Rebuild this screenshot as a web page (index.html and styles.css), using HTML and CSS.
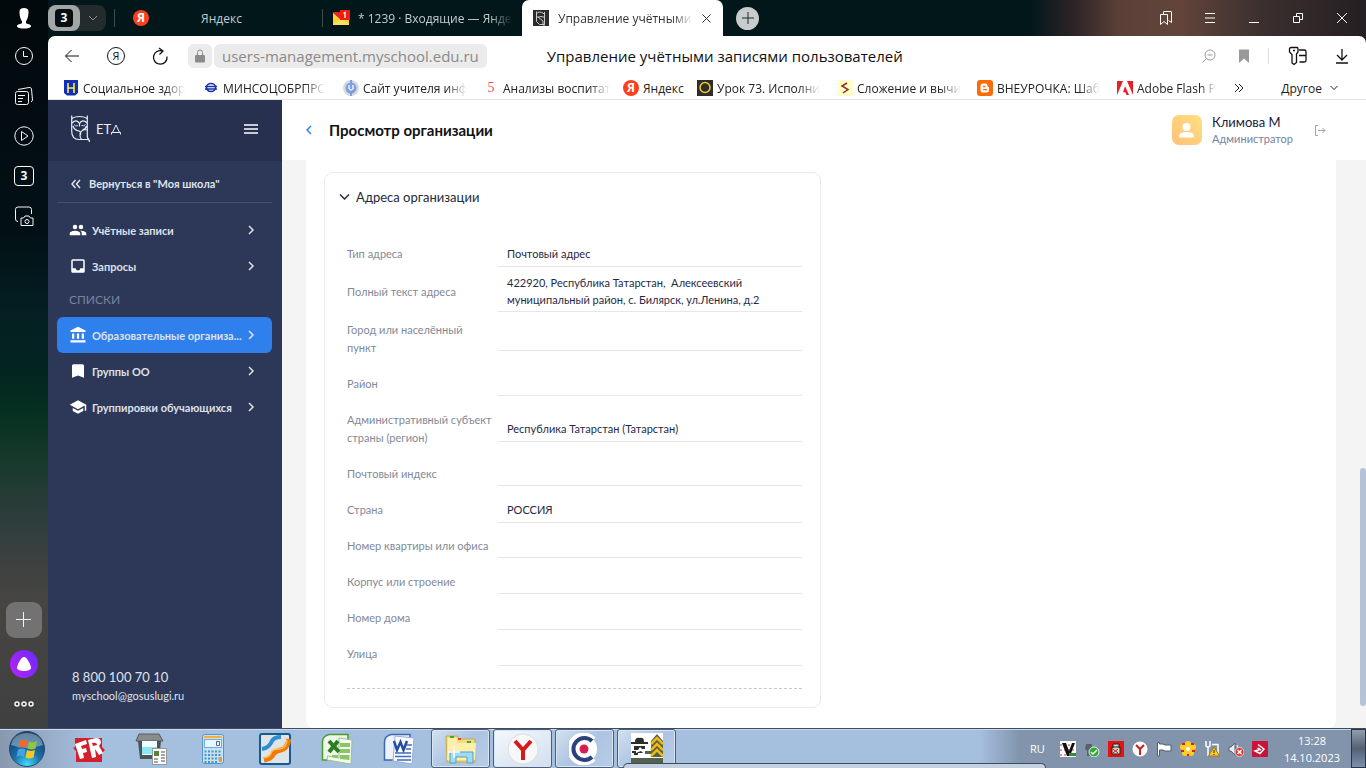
FILE: index.html
```html
<!DOCTYPE html>
<html lang="ru">
<head>
<meta charset="utf-8">
<title>Управление учётными записями пользователей</title>
<link rel="stylesheet" href="styles.css">
</head>
<body>
<div class="desktop">
  <div class="browser">
    <aside class="rail">
      <button class="rail-btn avatar-btn" aria-label="Профиль"><svg width="20" height="22" viewBox="0 0 20 22"><path d="M5.500 5C5.500 2 7 1 10 1s4.500 1 4.500 4-1 8-2.500 9v2c1 1.500 5 1 5 3s-4 2.500-7 2.500S3 21 3 19s4-1.500 5-3v-2C6.500 13 5.500 8 5.500 5z"/></svg></button>
      <button class="rail-btn" aria-label="История"><svg width="20" height="20" viewBox="0 0 20 20"><circle cx="10" cy="10" r="8.500"/><path d="M9.500 5v5.500H14"/></svg></button>
      <button class="rail-btn" aria-label="Коллекции"><svg width="20" height="20" viewBox="0 0 20 20"><rect x="1.500" y="5.500" width="13" height="13" rx="2"/><path d="M4 3.500 15 1.500q2-.5 2.500 1.500L18.500 14q0 1-1.500 2M4 9.500h7M4 12.500h5M4 15.500h4"/></svg></button>
      <button class="rail-btn" aria-label="Видео"><svg width="20" height="20" viewBox="0 0 20 20"><circle cx="10" cy="10" r="9.200"/><path d="M7.500 5.500v9l6.500-4.500z"/></svg></button>
      <button class="rail-btn" aria-label="Вкладки"><span class="rail-count">3</span></button>
      <button class="rail-btn" aria-label="Скриншот"><svg width="20" height="20" viewBox="0 0 20 20"><path d="M4 15.500q-2.500 0-2.500-2.500V3.500Q1.500 1 4 1h11q2.500 0 2.500 2.500V8M7 12h2.500l1.500-2h4l1.500 2H19v7.500H7z"/><circle cx="13" cy="15.500" r="2"/></svg></button>
      <div class="rail-bottom">
        <button class="rail-add" aria-label="Добавить"><svg width="16" height="16" viewBox="0 0 16 16"><path d="M7.500 0v15M0 7.500h15"/></svg></button>
        <button class="rail-alice" aria-label="Алиса"><svg width="16" height="16" viewBox="0 0 16 16"><path d="M8 1c3 0 7 8 7 11 0 4-14 4-14 0C1 9 5 1 8 1z" fill="#fff" stroke="none"/></svg></button>
        <button class="rail-btn" aria-label="Ещё"><svg width="20" height="8" viewBox="0 0 20 8" stroke-width="1.500"><circle cx="3" cy="4" r="2"/><circle cx="10" cy="4" r="2"/><circle cx="17" cy="4" r="2"/></svg></button>
      </div>
    </aside>

    <div class="frame">
      <div class="tabs">
        <div class="tab-group">
          <button class="group-count" aria-label="Группа вкладок"><span>3</span></button>
          <button class="group-arrow" aria-label="Список вкладок"><svg width="10" height="6" viewBox="0 0 10 6"><path d="m1 1 4 4 4-4"/></svg></button>
        </div>
        <div class="tab tab-pinned"><span class="ya">Я</span><span class="tab-title centered">Яндекс</span></div>
        <div class="tab tab-mail">
          <svg width="17" height="16" viewBox="0 0 17 16"><path d="M0 2h16v13H0z" fill="#ffd42e"/><path d="M0 2h16v1L8 10 0 3z" fill="#e52620"/><path d="M0 15 8 8l8 7z" fill="#ffe05c"/><rect x="7" y="0" width="10" height="10" fill="#f21c0d"/><path d="m10.500 3.500 1.500-1V8" fill="none" stroke="#fff" stroke-width="1.300"/></svg>
          <span class="tab-title fade">* 1239 · Входящие — Янде</span>
        </div>
        <div class="tab tab-active">
          <svg width="16" height="16" viewBox="0 0 16 16"><rect width="16" height="16" fill="#2c2c2e"/><path d="M3.500 1.500v10l3 3h5V2M3.500 4q2-4 8 0M4 7h3l1-1 1 1h2M5 7l5 4v4l2 0" fill="none" stroke="#c9c9c9"/></svg>
          <span class="tab-title fade">Управление учётными</span>
          <button class="tab-close" aria-label="Закрыть вкладку"><svg width="9" height="9" viewBox="0 0 9 9"><path d="m.5.5 8 8m0-8-8 8"/></svg></button>
        </div>
        <button class="new-tab" aria-label="Новая вкладка"><svg width="12" height="12" viewBox="0 0 12 12"><path d="M6 0v12M0 6h12"/></svg></button>
        <div class="window-tools">
          <button aria-label="Закладки"><svg width="14" height="16" viewBox="0 0 14 16"><path d="M1.500 4.500h7v10l-3.500-3-3.500 3zM4.500 4V2q0-.5.500-.5h7q.5 0 .5.500v10.500l-3-2"/></svg></button>
          <button aria-label="Меню"><svg width="14" height="16" viewBox="0 0 14 16"><path d="M2 3.500h10M2 8h10M2 12.500h10"/></svg></button>
          <button aria-label="Свернуть"><svg width="14" height="16" viewBox="0 0 14 16"><path d="M2 12.500h10"/></svg></button>
          <button aria-label="Развернуть"><svg width="14" height="16" viewBox="0 0 14 16"><path d="M2.500 6.500h6v6h-6zM5.500 6V3.500h6v6H9"/></svg></button>
          <button aria-label="Закрыть"><svg width="14" height="16" viewBox="0 0 14 16"><path d="m2 3 10 10M12 3 2 13"/></svg></button>
        </div>
      </div>

      <div class="window">
        <div class="toolbar">
          <button class="tool" aria-label="Назад"><svg width="16" height="14" viewBox="0 0 16 14"><path d="M15 7H1.500m6-6-6 6 6 6"/></svg></button>
          <button class="tool ya-home" aria-label="Яндекс">Я</button>
          <button class="tool" aria-label="Обновить"><svg width="18" height="18" viewBox="0 0 18 18" stroke-width="1.300"><path d="M16 9.500A6.800 6.800 0 1 1 11.500 4M8 1l4 3-3.500 3.500"/></svg></button>
          <span class="lock"><svg width="12" height="14" viewBox="0 0 12 14"><rect x="1" y="6" width="10" height="7.500" rx="1" fill="#8b8b8b"/><path d="M3.500 6V3.500a2.500 2.500 0 0 1 5 0V6" fill="none" stroke="#8b8b8b"/></svg></span>
          <button class="url">users-management.myschool.edu.ru</button>
          <span class="page-title">Управление учётными записями пользователей</span>
          <div class="toolbar-right">
            <button class="muted" aria-label="Масштаб"><svg width="14" height="14" viewBox="0 0 14 14"><circle cx="8" cy="6" r="5"/><path d="M5.500 6h5M4.500 9.500.5 13.500"/></svg></button>
            <button class="muted" aria-label="В закладки"><svg width="12" height="14" viewBox="0 0 12 14"><path d="M1 .5h10V14l-5-4.500L1 14z" fill="#999" stroke="none"/></svg></button>
            <span class="divider"></span>
            <button aria-label="Пароли"><svg width="20" height="20" viewBox="0 0 20 20" stroke-width="1.300"><path d="M3 1.500h6q1 0 1 1.500v3L8.500 8v8.500L6 18.500 4 17V8.500L1.500 6V3q0-1.500 1.500-1.500zM5 4.500h2M11 4h5.500q1.500 0 1.500 1.500v9q0 1.500-1.500 1.500h-5M11 9.500h7"/></svg></button>
            <button aria-label="Загрузки"><svg width="14" height="16" viewBox="0 0 14 16" stroke-width="1.300"><path d="M7 1v10.500M2 7l5 5 5-5M1 15h12"/></svg></button>
          </div>
        </div>

        <nav class="bookmarks">
          <a href="#"><svg width="16" height="16" viewBox="0 0 16 16"><path d="M1 0h14v13l-3 2.500H4L1 13z" fill="#1430b8"/><path d="M5 3v10M11 3v10M5 8h6" stroke="#fff23a" stroke-width="1.600"/></svg><span>Социальное здор</span></a>
          <a href="#"><svg width="16" height="16" viewBox="0 0 16 16" fill="none" stroke="#1530a8" stroke-width="1.500"><ellipse cx="8" cy="7.500" rx="4.500" ry="4"/><path d="M2 6.500h12M2 9h12"/></svg><span>МИНСОЦОБРПРС</span></a>
          <a href="#"><svg width="16" height="16" viewBox="0 0 16 16"><circle cx="8" cy="8" r="8" fill="#d9d9dc"/><circle cx="8" cy="8" r="5.500" fill="#7d9fe8"/><path d="M8 0v3M8 13v3" stroke="#7d9fe8" stroke-width="2"/><path d="M6 5v3.500q2 3 4 0V5" fill="none" stroke="#fff" stroke-width="1.300"/></svg><span>Сайт учителя инф</span></a>
          <a href="#"><span class="five">5</span><span>Анализы воспитат</span></a>
          <a href="#" class="short"><span class="ya">Я</span><span>Яндекс</span></a>
          <a href="#"><svg width="16" height="16" viewBox="0 0 16 16"><rect width="16" height="16" fill="#2d2d2d"/><circle cx="8" cy="7.500" r="5" fill="none" stroke="#f4c91e" stroke-width="1.500"/></svg><span>Урок 73. Исполни</span></a>
          <a href="#"><svg width="16" height="16" viewBox="0 0 16 16"><rect width="16" height="16" fill="#ffffcb"/><path d="M10 3 5 6l6 3.500L6 13" fill="none" stroke="#a02520" stroke-width="1.500"/></svg><span>Сложение и вычи</span></a>
          <a href="#"><svg width="16" height="16" viewBox="0 0 16 16"><rect width="16" height="16" rx="3" fill="#fb6c08"/><path d="M5.500 3.500h3q2 0 2 2 0 1.500 1.500 1.500v3q0 2.500-2.500 2.500h-4Q3.500 12.500 3.500 10V6q0-2.500 2-2.500z" fill="#fff"/><path d="M6 6.500h2.500M6 9.700h4" stroke="#fb6c08" stroke-width="1.300"/></svg><span>ВНЕУРОЧКА: Шаб</span></a>
          <a href="#" class="last"><svg width="16" height="16" viewBox="0 0 16 16"><path d="M0 1h16v14H0z" fill="#fff"/><path d="M0 1h6L0 15zM10 1h6v14z" fill="#ed1c24"/><path d="m8 6 4 9H9.500l-1-2.700H6z" fill="#ed1c24"/></svg><span>Adobe Flash P</span></a>
          <button class="more" aria-label="Ещё закладки"><svg width="10" height="10" viewBox="0 0 10 10"><path d="m1 1 4 4-4 4m4-8 4 4-4 4"/></svg></button>
          <button class="other">Другое <svg width="8" height="6" viewBox="0 0 8 6"><path d="m.5 1 3.500 3.500L7.500 1"/></svg></button>
        </nav>

        <div class="app">
          <aside class="sidebar">
            <div class="brand">
              <svg width="22" height="28" viewBox="0 0 22 28" fill="none" stroke="#e9edf5" stroke-width="1.200"><path d="M1.700.5V16q0 8.500 7.300 8.500h8.500q2 0 2 2.500M17.300.5V21q0 3 2 3.500M1.700 4Q4 1.500 9.500 1.500T17.300 4M2 8q4.500-4.500 7.500.5Q12.500 3.500 17 8M9.500 8.500v3M17 14.500q-7 0-7 6 0 3 2 4M3 11q1 4 6 5 2 .5 1.500 4M16.500 11q-1 3.500-4.500 4.500"/><path d="M4 9.500q1.500 2.500 4 1M11.500 10.500q2.500 1 4-1" stroke-width=".9"/></svg>
              <span class="brand-name">ЕТ<svg width="10" height="12" viewBox="0 0 10 12"><path d="M.5 11.500V9.500h9v2M1.500 9.500 5 2l3.500 7.500"/></svg></span>
              <button class="burger" aria-label="Свернуть меню"><svg width="14" height="12" viewBox="0 0 14 12"><path d="M0 2h14M0 6h14M0 10h14"/></svg></button>
            </div>
            <nav class="side-nav">
              <a href="#" class="back-link"><svg width="10" height="10" viewBox="0 0 10 10"><path d="M4.500 1 1 5l3.500 4M9 1 5.500 5 9 9"/></svg>Вернуться в "Моя школа"</a>
              <a href="#" class="nav-item"><svg class="ni" viewBox="0 0 24 24"><path d="M16 11a3 3 0 1 0 0-6 3 3 0 0 0 0 6zm-8 0a3 3 0 1 0 0-6 3 3 0 0 0 0 6zm0 2c-2.330 0-7 1.170-7 3.500V19h14v-2.500C15 14.170 10.330 13 8 13zm8 0c-.29 0-.62.020-.97.050 1.160.84 1.970 1.970 1.970 3.450V19h6v-2.500c0-2.330-4.670-3.500-7-3.500z"/></svg><span>Учётные записи</span><svg class="chev" viewBox="0 0 7 10"><path d="m1 1 4 4-4 4"/></svg></a>
              <a href="#" class="nav-item"><svg class="ni" viewBox="0 0 24 24"><path d="M19 3H5a2 2 0 0 0-2 2v14c0 1.100.9 2 2 2h14a2 2 0 0 0 2-2V5a2 2 0 0 0-2-2zm0 12h-4a3 3 0 0 1-6 0H5V5h14z"/></svg><span>Запросы</span><svg class="chev" viewBox="0 0 7 10"><path d="m1 1 4 4-4 4"/></svg></a>
              <h2 class="nav-head">СПИСКИ</h2>
              <a href="#" class="nav-item active"><svg class="ni" viewBox="0 0 24 24"><path d="M4 10v7h3v-7zm6.500 0v7h3v-7zM2 22h20v-3H2zm15-12v7h3v-7zm-5-9L2 6v2h20V6z"/></svg><span>Образовательные организа...</span><svg class="chev" viewBox="0 0 7 10"><path d="m1 1 4 4-4 4"/></svg></a>
              <a href="#" class="nav-item"><svg class="ni" viewBox="0 0 24 24"><path d="M18 3H6a2 2 0 0 0-2 2v16l8-3 8 3V5a2 2 0 0 0-2-2z"/></svg><span>Группы ОО</span><svg class="chev" viewBox="0 0 7 10"><path d="m1 1 4 4-4 4"/></svg></a>
              <a href="#" class="nav-item"><svg class="ni" viewBox="0 0 24 24"><path d="M5 13.180v4L12 21l7-3.820v-4L12 17zM12 3 1 9l11 6 9-4.910V17h2V9z"/></svg><span>Группировки обучающихся</span><svg class="chev" viewBox="0 0 7 10"><path d="m1 1 4 4-4 4"/></svg></a>
            </nav>
            <footer class="contacts"><a class="phone" href="#">8 800 100 70 10</a><a class="mail" href="#">myschool@gosuslugi.ru</a></footer>
          </aside>

          <section class="content">
            <header class="page-head">
              <button class="back" aria-label="Назад"><svg width="6" height="10" viewBox="0 0 6 10"><path d="M5 1 1 5l4 4"/></svg></button>
              <h1>Просмотр организации</h1>
              <div class="user">
                <svg width="30" height="30" viewBox="0 0 30 30"><defs><linearGradient id="av" x1="0" y1="1" x2="1" y2="0"><stop offset="0" stop-color="#ffc078"/><stop offset="1" stop-color="#ffe082"/></linearGradient></defs><rect width="30" height="30" rx="7" fill="url(#av)"/><circle cx="14.500" cy="12" r="4" fill="#fff"/><path d="M7 22.500V21q0-4 7.500-4t7.500 4v1.500z" fill="#fff"/></svg>
                <div><div class="user-name">Климова М</div><div class="user-role">Администратор</div></div>
                <button class="exit" aria-label="Выйти"><svg width="11" height="11" viewBox="0 0 11 11"><path d="M3 .5H.5v10H3M3 5.500h7M7.500 3 10 5.500 7.500 8"/></svg></button>
              </div>
            </header>
            <div class="scroll-area">
              <div class="panel">
                <section class="card">
                  <h2><svg width="11" height="8" viewBox="0 0 11 8"><path d="m1 1.500 4.500 4.500L10 1.500"/></svg>Адреса организации</h2>
                  <dl>
                    <div class="row"><dt>Тип адреса</dt><dd class="filled">Почтовый адрес</dd></div>
                    <div class="row"><dt>Полный текст адреса</dt><dd class="filled">422920, Республика Татарстан, &nbsp;Алексеевский муниципальный район, с. Билярск, ул.Ленина, д.2</dd></div>
                    <div class="row"><dt>Город или населённый пункт</dt><dd></dd></div>
                    <div class="row"><dt>Район</dt><dd></dd></div>
                    <div class="row"><dt>Административный субъект страны (регион)</dt><dd class="filled">Республика Татарстан (Татарстан)</dd></div>
                    <div class="row"><dt>Почтовый индекс</dt><dd></dd></div>
                    <div class="row"><dt>Страна</dt><dd class="filled">РОССИЯ</dd></div>
                    <div class="row"><dt>Номер квартиры или офиса</dt><dd></dd></div>
                    <div class="row"><dt>Корпус или строение</dt><dd></dd></div>
                    <div class="row"><dt>Номер дома</dt><dd></dd></div>
                    <div class="row"><dt>Улица</dt><dd></dd></div>
                  </dl>
                </section>
              </div>
              <div class="scroll-thumb"></div>
            </div>
          </section>
        </div>
      </div>
    </div>
  </div>

  <footer class="taskbar">
    <button class="start" aria-label="Пуск"><svg width="38" height="38" viewBox="0 0 38 38"><defs><radialGradient id="orb" cx=".5" cy=".95" r=".9"><stop offset="0" stop-color="#3fe0ff"/><stop offset=".45" stop-color="#1b6fa8"/><stop offset="1" stop-color="#123f6c"/></radialGradient></defs><circle cx="19" cy="19" r="17.500" fill="url(#orb)" stroke="#2b4965"/><path d="M3 15Q6 3 19 3t16 12Q19 21 3 15z" fill="#fff" opacity=".35"/><path d="M12 11q4-2.500 7.500 0L18 18q-3.500-2-7.500 0z" fill="#f2682a"/><path d="M21 11.500q4 2 8-.5l-1.500 7.500q-4 2-8 0z" fill="#8fc63d"/><path d="M10 19.500q4-2 7.500 0L16 27q-3.500-2.500-7.500 0z" fill="#3fa4e8"/><path d="M19 20q4 2 8 0l-1.500 7.500q-4 2-8 0z" fill="#fdc823"/></svg></button>
    <button class="task" aria-label="FineReader"><svg width="32" height="32" viewBox="0 0 32 32"><path d="M2 5h27v9l3 3-3 3v9H3V18l-3-3 2-1z" fill="#d3202c"/><path d="m2 11 11-4 1 4-6 2 1 3 4-1 1 4-4 1 1 5-4 1zM15 7l8-2q5 0 5 5l-2 3 4 7-4 2-4-6 1 8-4 1zm4 3 1 3 4-1q0-3-5-2z" fill="#fff" fill-rule="evenodd"/></svg></button>
    <button class="task" aria-label="Сканер"><svg width="32" height="32" viewBox="0 0 32 32"><path d="m4 1 20 0 4 7H1z" fill="#8a8c8c" stroke="#585b5c"/><path d="M3 8h23l-2 18H5z" fill="#4c5356"/><path d="M7 8h15v14H7z" fill="#f0fcff"/><path d="M7 14h15v7H7z" fill="#8be5f5"/><rect x="17.500" y="15.500" width="14" height="16" fill="#fafafa" stroke="#999"/><path d="M19 18h5v5h-5z" fill="#58803d"/><path d="M26 19h4M26 22h4M19 26h4M26 25h4M19 29h4M26 28h4" stroke="#888" stroke-width="1.500"/></svg></button>
    <button class="task" aria-label="Калькулятор"><svg width="32" height="32" viewBox="0 0 32 32"><rect x="5.500" y="1.500" width="21" height="29" rx="2" fill="#c5e3f7" stroke="#5695c7"/><path d="M7 3h18v2H7z" fill="#ffad32"/><rect x="7.500" y="6.500" width="17" height="8" fill="#e8f7ff" stroke="#75aad1"/><path d="M19.500 8.500h3v4h-3z" fill="none" stroke="#526a83"/><path d="M7.500 18.500h17M7.500 22h17M7.500 25.500h17M7.500 29h13" stroke="#4f8fbd" stroke-width="2" stroke-dasharray="2 1.500"/><path d="M22 24h3v5h-3z" fill="#f2962d"/></svg></button>
    <button class="task" aria-label="Редактор PDF"><svg width="32" height="32" viewBox="0 0 32 32"><rect x="1" y="1" width="30" height="30" rx="2" fill="#dfe4e8" stroke="#165a93" stroke-width="2"/><path d="M3 16q7-1 10-8 2-4 9-4" fill="none" stroke="#2e8fd0" stroke-width="4"/><path d="M5 27q7-1 9-5t8-5 8-11" fill="none" stroke="#f17b0a" stroke-width="5"/><path d="M4 25q7-1 8-5t8-4 8-9" fill="none" stroke="#ffc14a" stroke-width="1.500"/></svg></button>
    <button class="task" aria-label="Excel"><svg width="32" height="32" viewBox="0 0 32 32"><path d="M8 1.500h19V22l-4 5H1.500V9q0-6 6.500-7.500z" fill="#eef7e8" stroke="#4e9933" stroke-width="1.500"/><path d="m18 5 13 2-1 24-24-4 .5-4L18 25z" fill="#f5faef" stroke="#9bc28a"/><path d="M19 10h10v4H19zm0 6h10v4H19zm0 6h9.500v5l-9.500-1zM11 22h6v3l-6-1z" fill="#8cc567"/><path d="m8 8 10 11M17 8 8 19" stroke="#2c7d26" stroke-width="4"/></svg></button>
    <button class="task" aria-label="Word"><svg width="32" height="32" viewBox="0 0 32 32"><path d="M8 1.500h19V22l-4 5H1.500V9q0-6 6.500-7.500z" fill="#eef2fa" stroke="#3f65b5" stroke-width="1.500"/><path d="m12 3 19 2-2 26-19-3z" fill="#f9fbff" stroke="#98aed5"/><path d="m11 8 3 9 3.500-8 3 8L24 8" fill="none" stroke="#254d9e" stroke-width="2.500"/><path d="M23 12h6M23 16h5M12 20h16M12 23.500h16M14 27h14" stroke="#456bb8" stroke-width="1.500"/></svg></button>
    <button class="task open" aria-label="Проводник"><svg width="32" height="32" viewBox="0 0 32 32"><path d="M1 3h11l2 3h16v23H2z" fill="#f3dc7c" stroke="#c7a848"/><path d="M3 5h9v5h19l-1 17H2z" fill="#ffefac"/><path d="M5 3h4v2H5zM22 8h4v2h-4z" fill="#3fa83a"/><path d="M13 5h3v2h-3z" fill="#e74834"/><path d="M5 30V19h23v11h-6v-6H11v6z" fill="#9fdcf0" stroke="#4ba3c8"/><path d="M9 13v12M3 19h12" stroke="#fff" stroke-width="1.500"/></svg></button>
    <button class="task open current" aria-label="Яндекс Браузер"><svg width="32" height="32" viewBox="0 0 32 32"><circle cx="16" cy="16" r="15" fill="#f8f8f8" stroke="#ddd"/><path d="m8 8 8 9 8-9M16 17v10" fill="none" stroke="#d21920" stroke-width="4"/></svg></button>
    <button class="task open" aria-label="КриптоПро"><svg width="32" height="32" viewBox="0 0 32 32"><circle cx="14" cy="16" r="14" fill="#fff"/><path d="M24 7a13 13 0 1 0 0 18" fill="none" stroke="#fff" stroke-width="7"/><path d="M23 8a11 11 0 1 0 0 16" fill="none" stroke="#2c407e" stroke-width="4"/><circle cx="15" cy="16" r="4.500" fill="#d81e50"/></svg></button>
    <button class="task open" aria-label="Агент"><svg width="32" height="32" viewBox="0 0 32 32"><path d="M0 0h32v32H0z" fill="#fff"/><path d="M20 24V8l6-7 6 7v16zM0 25h32v6H0zM14 18h6v3h-6z" fill="#53614c"/><path d="m20 11 6-6 6 6M20 17l6-6 6 6M20 23l6-6 6 6" fill="none" stroke="#f3b814" stroke-width="2.500"/><path d="M4 9q0-5 5-4 4-1 4 4h4v2H0V9zM3 13h11v3h-3l-2-2-2 3H3zM12 20H7v2H3v-2H1v-2h4v2l5-2z" fill="#292f29"/></svg></button>
    <div class="tray">
      <span class="lang">RU</span>
      <span class="tray-icons">
        <svg viewBox="0 0 16 16"><path d="M0 0h16v16H0z" fill="#fff"/><path d="M0 4h16M0 9h16M0 14h16" stroke="#bd343a" stroke-dasharray="2 2"/><path d="M2 2h4l3 8 3-8h3L10 15H7z" fill="#111"/><path d="M9 12h7v3H9z" fill="#2e8d35"/></svg>
        <svg viewBox="0 0 16 16"><path d="M2 3h6v5l-2 2v5H3v-5L1 8z" fill="#5a6268"/><circle cx="10" cy="11" r="5" fill="#31a838" stroke="#e3f4e3"/><path d="m7 11 2 2 4-4" fill="none" stroke="#fff" stroke-width="1.500"/></svg>
        <svg viewBox="0 0 16 16"><path d="M0 0h16v16H0z" fill="#e8110e"/><path d="M5 7V3h6v4M4 6h8v7H4z" fill="#d9d5cb" stroke="#222"/><path d="m5 8 5 4m0-4-5 4M2 14h12" stroke="#bd1d12"/></svg>
        <svg viewBox="0 0 16 16"><circle cx="8" cy="8" r="7.500" fill="#fff"/><path d="m4 4 4 4 4-4M8 8v6" fill="none" stroke="#d31b20" stroke-width="2"/></svg>
        <svg viewBox="0 0 16 16"><path d="M1.500 1.500h2V3H7l2 1h6v6H9L7 9H3.500v6h-2z" fill="#fff" stroke="#4e5c6f"/></svg>
        <svg viewBox="0 0 16 16"><g fill="#ffce25"><circle cx="8" cy="3" r="3"/><circle cx="3" cy="6" r="3"/><circle cx="13" cy="6" r="3"/><circle cx="5" cy="12" r="3"/><circle cx="11" cy="12" r="3"/><circle cx="8" cy="8" r="4"/></g><circle cx="8" cy="8" r="2" fill="#fff"/><path d="M2 3h3M11 3h3M1 10h3M12 10h3M7 14h2" stroke="#d9221e" stroke-width="2"/></svg>
        <svg viewBox="0 0 16 16"><path d="M2 0v5q2 2 4 0V0M4 6v9M8 3.500h6v9H8" fill="none" stroke="#fff" stroke-width="1.500"/><path d="m10 6 5.500 9h-11z" fill="#ffce29" stroke="#a47a0a"/><path d="M10 9v3M10 13v1" stroke="#222"/></svg>
        <svg viewBox="0 0 16 16"><path d="M1 6h2l4-4v12l-4-4H1z" fill="#e8edf2" stroke="#506075"/><path d="M9 4q3 4 0 8" fill="none" stroke="#fff"/><circle cx="11.500" cy="11" r="4.500" fill="#d93731" stroke="#f9c9c5"/><path d="m9.500 9 4 4m0-4-4 4" stroke="#fff" stroke-width="1.500"/></svg>
        <svg viewBox="0 0 16 16"><rect width="16" height="16" rx="1" fill="#cc1236"/><path d="m6 3.500 6 4.500-4 4.500L3 10l5-1.500M5.500 7 9 9" fill="none" stroke="#fff" stroke-width="1.500"/></svg>
      </span>
      <time class="clock"><span>13:28</span><span>14.10.2023</span></time>
      <button class="show-desktop" aria-label="Показать рабочий стол"></button>
    </div>
    <div class="popup-edge"></div>
  </footer>
</div>
</body>
</html>
```

FILE: styles.css
```css
* { box-sizing: border-box; }
body { margin: 0; font-family: "Open Sans", "Noto Sans", sans-serif; font-size: 12px; color: #222; }
button { border: 0; padding: 0; margin: 0; background: none; font: inherit; color: inherit; display: flex; align-items: center; justify-content: center; cursor: pointer; }
a { color: inherit; text-decoration: none; }
svg { flex: none; display: block; }
h1, h2, dl, dd { margin: 0; }
button svg, .card h2 svg, .back-link svg, .chev, .brand-name svg { fill: none; stroke: currentColor; }

.desktop { display: flex; flex-direction: column; height: 100vh; overflow: hidden; }
.browser {
  flex: 1; min-height: 0; display: flex;
  background:
    linear-gradient(90deg, transparent 1030px, #2f2527 1076px, #5c4038 1120px, #62443a 1180px, #3c302f 1260px, #241f22 1366px) 0 0 / 100% 48px no-repeat,
    linear-gradient(180deg, #02090c 0, #021015 230px, #031f22 310px, #032420 370px, #053020 410px, #17392c 460px, #323e3e 530px, #474542 600px, #3f4040 728px) 0 0 / 48px 100% no-repeat,
    #02171a;
}

/* Left rail */
.rail { width: 48px; display: flex; flex-direction: column; align-items: center; color: #f4f4f4; }
.rail-btn { width: 48px; height: 40px; }
.avatar-btn { height: 36px; }
.avatar-btn svg { stroke: none; fill: #fff; }
.rail-count { width: 20px; height: 20px; border: 1px solid #fff; border-radius: 4px; line-height: 18px; font-weight: 700; }
.rail-bottom { margin-top: auto; display: flex; flex-direction: column; align-items: center; gap: 12px; padding-bottom: 4px; }
.rail-bottom .rail-btn { margin-top: -6px; }
.rail-add { width: 36px; height: 36px; border-radius: 9px; background: #727272; }
.rail-alice { width: 28px; height: 28px; border-radius: 50%; background: linear-gradient(60deg, #b722f5, #6a2bff); }

/* Tabs */
.frame { flex: 1; min-width: 0; display: flex; flex-direction: column; }
.tabs { height: 36px; display: flex; align-items: center; color: #c6cccc; }
.tab-group { display: flex; width: 58px; height: 26px; border-radius: 8px; background: #232b2c; }
.group-count { width: 32px; border-radius: 8px; background: #a3a6a6; }
.group-count span { width: 18px; height: 18px; border-radius: 4px; background: #050e10; color: #fff; font-weight: 700; line-height: 18px; }
.group-arrow { flex: 1; color: #8b9292; }
.tab { display: flex; align-items: center; min-width: 0; }
.tab-pinned { width: 208px; height: 18px; margin-left: 8px; padding-left: 18px; border-left: 1px solid #3f4b4c; }
.tab-mail { width: 200px; height: 18px; padding: 0 9px 0 10px; gap: 8px; border-left: 1px solid #3f4b4c; }
.tab-active { width: 201px; height: 36px; padding: 0 12px 0 11px; gap: 9px; background: #fff; color: #333; border-radius: 7px 7px 0 0; }
.tab-title { flex: 1; min-width: 0; overflow: hidden; white-space: nowrap; }
.centered { text-align: center; padding-right: 28px; }
.ya { flex: none; width: 16px; height: 16px; border-radius: 50%; background: #fc3f1d; color: #fff; font-weight: 700; line-height: 16px; text-align: center; }
.fade { -webkit-mask-image: linear-gradient(90deg, #000 85%, transparent); mask-image: linear-gradient(90deg, #000 85%, transparent); }
.new-tab { width: 23px; height: 23px; margin-left: 13px; border-radius: 50%; background: #c9cccd; color: #1b2a2c; }
.window-tools { margin-left: auto; padding-right: 17px; display: flex; gap: 30px; color: #fff; }

/* Browser window */
.window { flex: 1; min-height: 0; display: flex; flex-direction: column; background: #fff; border-radius: 7px 7px 0 0; overflow: hidden; }
.toolbar { height: 40px; flex: none; display: flex; align-items: center; padding: 0 17px 0 15px; color: #111; }
.tool { width: 18px; height: 18px; margin-right: 26px; }
.ya-home { border: 1px solid #111; border-radius: 50%; font-size: 11px; line-height: 16px; }
.lock, .url { height: 24px; background: #ebebeb; border-radius: 6px; }
.lock { width: 24px; margin: 0 2px 0 -7px; display: grid; place-items: center; flex: none; }
.url { flex: none; padding: 0 8px; color: #8a8a8a; font-size: 15px; }
.page-title { margin-left: 60px; font-size: 15px; white-space: nowrap; }
.toolbar-right { margin-left: auto; display: flex; align-items: center; gap: 19px; }
.toolbar-right .muted { width: 16px; color: #999; }
.toolbar-right .divider { width: 1px; height: 16px; margin-left: -3px; background: #ddd; }
.toolbar-right button:last-child { margin-left: 8px; }

.bookmarks { height: 24px; flex: none; display: flex; gap: 13px; padding: 1px 28px 0 15px; align-items: center; border-bottom: 1px solid #e4e4e4; }
.bookmarks a { flex: none; display: flex; align-items: center; gap: 4px; width: 127px; }
.bookmarks a.short { width: 61px; }
.bookmarks a.last { width: 103px; }
.bookmarks a > span:last-child { overflow: hidden; white-space: nowrap; -webkit-mask-image: linear-gradient(90deg, #000 80%, transparent); mask-image: linear-gradient(90deg, #000 80%, transparent); }
.bookmarks a.short > span:last-child { -webkit-mask-image: none; mask-image: none; overflow: visible; }
.bookmarks .five { width: 16px; text-align: center; color: #ee4d6b; font-family: "Liberation Serif", serif; font-size: 14px; }
.more { margin-left: 1px; }
.other { margin-left: auto; gap: 8px; white-space: nowrap; }

/* Application */
.app { flex: 1; min-height: 0; display: flex; font-family: Lato, sans-serif; }
.sidebar { width: 234px; flex: none; display: flex; flex-direction: column; background: #2d3858; color: #dfe3ec; }
.brand { height: 61px; display: flex; align-items: center; padding: 0 24px 2px 22px; gap: 4px; background: #27304e; border-bottom: 1px solid #253050; }
.brand-name { display: flex; align-items: center; font-size: 13px; color: #e9edf5; }
.burger { margin-left: auto; color: #fff; }
.burger svg { stroke-width: 1.5; }
.side-nav { padding: 4px 10px 0 9px; font-size: 11px; font-weight: 700; }
.back-link { display: flex; align-items: center; gap: 8px; height: 38px; padding-left: 14px; border-bottom: 1px solid #435070; margin-bottom: 9px; }
.back-link svg { stroke-width: 1.5; }
.nav-item { display: flex; align-items: center; height: 36px; padding: 0 17px 0 12px; gap: 5px; border-radius: 6px; color: #dde1ea; }
.nav-item span { flex: 1; min-width: 0; white-space: nowrap; }
.nav-item.active { background: #2f80ed; }
.ni { width: 18px; height: 18px; fill: #fff; }
.chev { width: 7px; height: 10px; stroke-width: 1.5; }
.nav-head { height: 33px; padding-left: 12px; font-size: 12px; line-height: 32px; font-weight: 400; color: #78829d; }
.contacts { margin-top: auto; padding: 0 24px 23px; display: flex; flex-direction: column; }
.phone { font-size: 13px; line-height: 20px; }
.mail { font-size: 11px; line-height: 18px; }

.content { flex: 1; min-width: 0; display: flex; flex-direction: column; background: #f4f4f4; }
.page-head { height: 60px; flex: none; display: flex; align-items: center; padding: 0 40px 0 24px; background: #fff; }
.back { color: #2f80ed; }
.back svg { stroke-width: 1.5; }
.page-head h1 { margin-left: 17px; font-size: 15px; font-weight: 700; color: #111; }
.user { margin-left: auto; display: flex; align-items: center; gap: 10px; }
.user-name { font-size: 13px; line-height: 18px; color: #16213d; }
.user-role { font-size: 11px; line-height: 16px; color: #7782a0; }
.exit { margin-left: 12px; color: #9aa2b3; }
.scroll-area { flex: 1; min-height: 0; display: flex; position: relative; padding: 0 30px 0 24px; }
.panel { flex: 1; display: grid; grid-template-columns: 1fr 1fr; align-items: start; padding: 12px 18px 19px; background: #fff; border-radius: 0 0 8px 8px; }
.scroll-thumb { position: absolute; right: 0; top: 308px; bottom: 22px; width: 6px; border-radius: 3px; background: #b5c1d6; }
.card { border: 1px solid #e8e9ed; border-radius: 9px; padding: 13px 18px 18px 14px; }
.card h2 { display: flex; align-items: center; gap: 6px; height: 22px; font-size: 13px; font-weight: 400; color: #222b3c; }
.card h2 svg { stroke-width: 1.5; }
.card dl { margin: 28px 0 0 8px; padding-bottom: 16px; border-bottom: 1px dashed #c6c8cf; }
.row { display: grid; grid-template-columns: 151px 1fr; align-items: center; }
.row dt { padding: 9px 5px 9px 0; font-size: 11px; line-height: 18px; color: #828997; }
.row dd { min-height: 24px; border-bottom: 1px solid #e6e7eb; }
.row dd.filled { min-height: 26px; display: flex; align-items: center; padding: 2px 40px 3px 9px; font-size: 11px; line-height: 17px; color: #1f2a48; }

/* Taskbar */
.taskbar { position: relative; height: 40px; flex: none; display: flex; align-items: stretch; gap: 3px; padding-left: 8px; border-top: 1px solid #3e4b60; background: linear-gradient(90deg, #8898ae, #a5bfdf 90px, #a5bfdf 980px, #8194ac 1020px, #8194ac); box-shadow: inset 0 1px #cad9eb; }
.taskbar > .start { width: 38px; margin-right: 10px; }
.task { width: 59px; border: 1px solid transparent; border-radius: 3px; }
.start svg, .task svg { stroke: none; }
.task.open { border-color: #4d5e78; background: linear-gradient(135deg, #d3e0ef, #adc4e2 50%, #b7cce6); box-shadow: inset 0 0 0 1px #d9e5f3; }
.task.current { background: linear-gradient(150deg, #f4f8fc, #d1dfee); }
.tray { margin-left: auto; display: flex; align-items: center; color: #fff; font-size: 11px; }
.tray-icons { display: flex; gap: 8px; margin: 0 16px 0 15px; }
.tray-icons svg { width: 16px; height: 16px; }
.clock { display: flex; flex-direction: column; align-items: center; line-height: 17px; margin-right: 11px; }
.show-desktop { width: 15px; height: 100%; border: 1px solid #2b3544; background: linear-gradient(#929dab, #536174 50%, #7c8fac); }
.popup-edge { position: absolute; left: 623px; bottom: 0; width: 423px; height: 5px; background: #c3d0df; border: 1px solid #404b5c; border-bottom: 0; border-radius: 5px 5px 0 0; }
```
